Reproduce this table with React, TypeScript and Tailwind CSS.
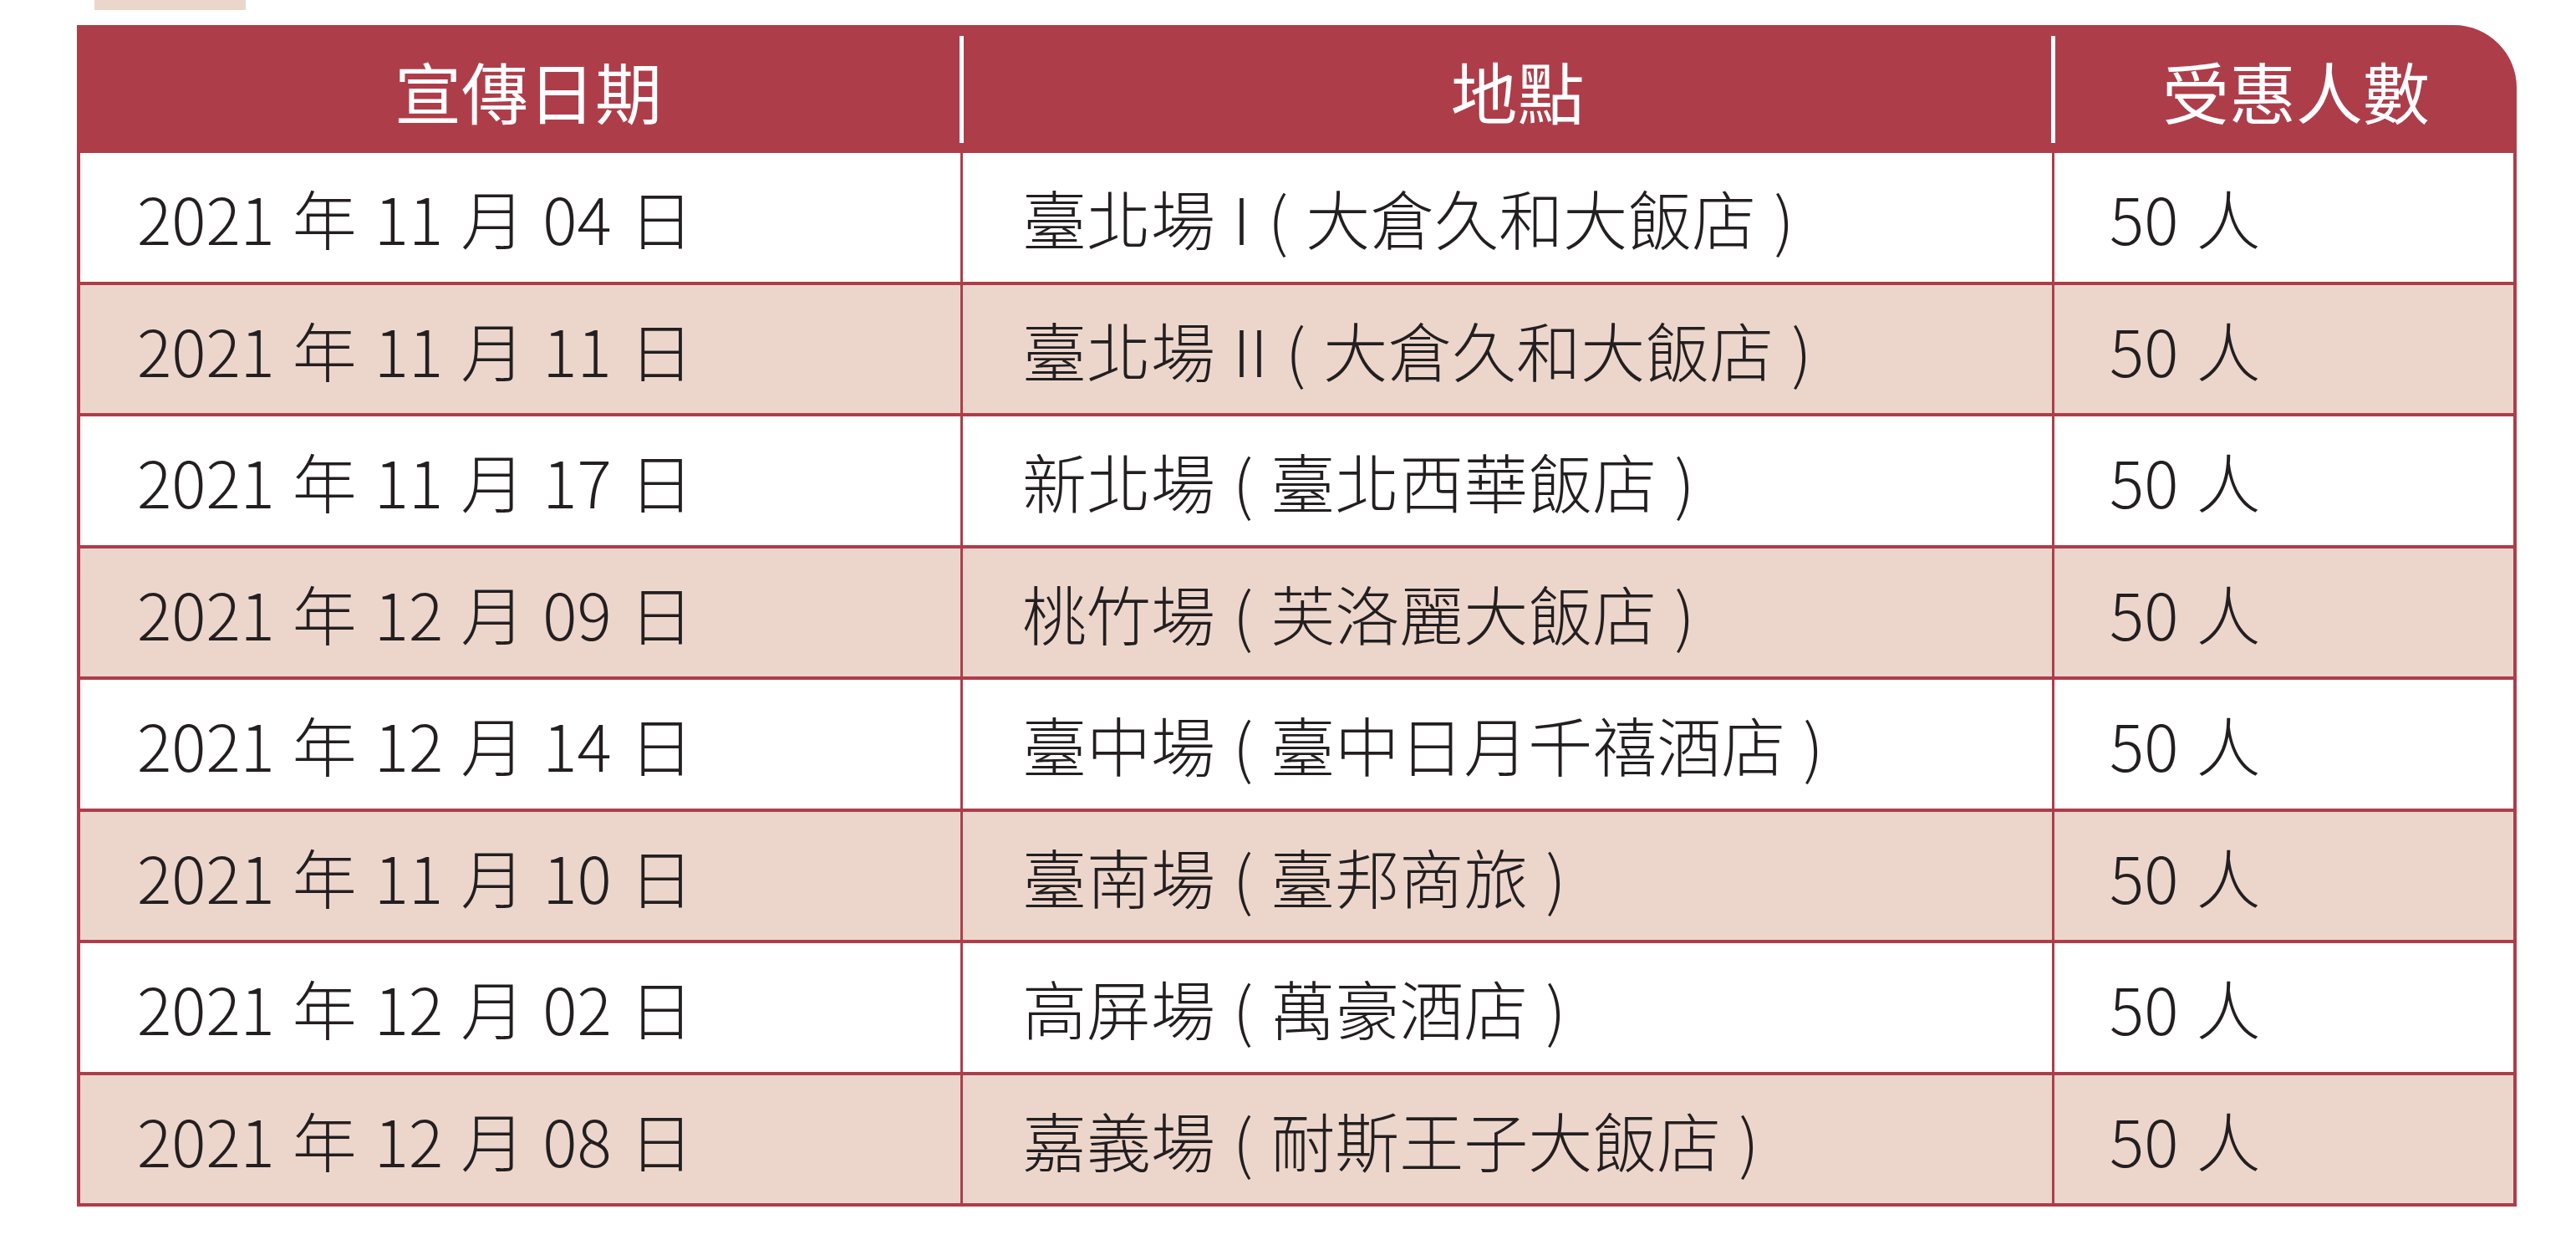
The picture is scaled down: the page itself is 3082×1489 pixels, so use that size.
const rows = [
  { date: '2021 年 11 月 04 日', place: '臺北場 I ( 大倉久和大飯店 )', people: '50 人' },
  { date: '2021 年 11 月 11 日', place: '臺北場 II ( 大倉久和大飯店 )', people: '50 人' },
  { date: '2021 年 11 月 17 日', place: '新北場 ( 臺北西華飯店 )', people: '50 人' },
  { date: '2021 年 12 月 09 日', place: '桃竹場 ( 芙洛麗大飯店 )', people: '50 人' },
  { date: '2021 年 12 月 14 日', place: '臺中場 ( 臺中日月千禧酒店 )', people: '50 人' },
  { date: '2021 年 11 月 10 日', place: '臺南場 ( 臺邦商旅 )', people: '50 人' },
  { date: '2021 年 12 月 02 日', place: '高屏場 ( 萬豪酒店 )', people: '50 人' },
  { date: '2021 年 12 月 08 日', place: '嘉義場 ( 耐斯王子大飯店 )', people: '50 人' },
];

export default function App() {
  return (
    <div className="min-h-screen w-full bg-white font-['Noto_Sans_CJK_TC',sans-serif] text-[#231f20]">
      {/* little tab left over from the page above */}
      <div className="ml-[113px] h-[12px] w-[181px] bg-[#ecd6cc]" />

      <div className="ml-[92px] mt-[18px] w-[2919px]">
        {/* header */}
        <div className="flex h-[153px] items-center rounded-tr-[75px] bg-[#ae3d4a] text-[80px] leading-none text-white">
          <div className="flex w-[1056px] justify-center pl-[24px]">宣傳日期</div>
          <div className="h-[128px] w-[5px] bg-white" />
          <div className="flex w-[1301px] justify-center pl-[24px]">地點</div>
          <div className="h-[128px] w-[5px] bg-white" />
          <div className="flex flex-1 justify-center pl-[24px]">受惠人數</div>
        </div>

        {/* body */}
        {rows.map((r, i) => (
          <div
            key={i}
            className={`flex h-[157.5px] border-x-4 border-b-4 border-[#ae3d4a] text-[77px] font-light leading-none [word-spacing:4px] ${
              i % 2 === 1 ? 'bg-[#ecd6cc]' : 'bg-white'
            }`}
          >
            <div className="flex w-[1056px] items-center border-r-[3px] border-[#ae3d4a] pl-[68px] whitespace-pre">
              {r.date}
            </div>
            <div className="flex w-[1306px] items-center border-r-[3px] border-[#ae3d4a] pl-[71px] whitespace-pre">
              {r.place}
            </div>
            <div className="flex flex-1 items-center pl-[66px] whitespace-pre">{r.people}</div>
          </div>
        ))}
      </div>
    </div>
  );
}
